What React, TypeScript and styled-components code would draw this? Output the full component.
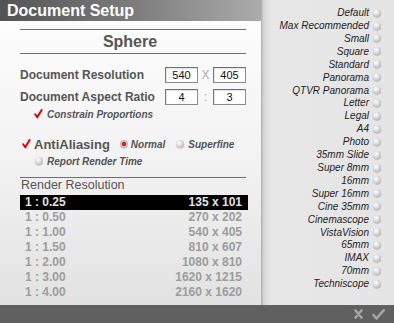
import React from 'react';
import styled, { createGlobalStyle } from 'styled-components';

const Global = createGlobalStyle`
  html, body { margin: 0; padding: 0; }
  body {
    font-family: "Liberation Sans", Arial, Helvetica, sans-serif;
    background: #606060;
  }
  * { box-sizing: border-box; }
`;

const Window = styled.div`
  width: 394px;
  height: 323px;
  display: flex;
  flex-direction: column;
  overflow: hidden;
`;

const Main = styled.div`
  display: flex;
  height: 305px;
`;

const LeftColumn = styled.div`
  width: 261px;
  display: flex;
  flex-direction: column;
`;

const TitleBar = styled.div`
  height: 21px;
  background: linear-gradient(to right, #535353 0%, #7b7b7b 50%, #ababab 100%);
  color: #fff;
  font-weight: bold;
  font-size: 16px;
  line-height: 21px;
  padding-left: 7px;
`;

const Panel = styled.div`
  flex: 1;
  background: linear-gradient(to bottom, #fdfdfd 0%, #f2f2f2 50%, #e2e2e2 100%);
  padding: 8px 15px 0 20px;
  display: flex;
  flex-direction: column;
`;

const Header = styled.div`
  border-top: 1px solid #6e6e6e;
  border-bottom: 1px solid #6e6e6e;
  height: 25px;
  display: flex;
  align-items: center;
  justify-content: center;
  font-size: 16px;
  font-weight: bold;
  color: #555;
  padding-right: 6px;
`;

const FieldRow = styled.div<{ $mt: number }>`
  display: flex;
  align-items: center;
  height: 16px;
  margin-top: ${(p) => p.$mt}px;
`;

const FieldLabel = styled.div`
  flex: 1;
  font-size: 12px;
  font-weight: bold;
  color: #555;
`;

const NumBox = styled.div`
  width: 33px;
  height: 16px;
  border: 1px solid #8a8a8a;
  border-top-color: #707070;
  border-left-color: #7a7a7a;
  background: #fff;
  box-shadow: inset 1px 1px 1px rgba(0, 0, 0, 0.12);
  font-size: 11px;
  line-height: 14px;
  text-align: center;
  color: #111;
`;

const Sep = styled.div`
  width: 15px;
  text-align: center;
  font-size: 12px;
  color: #aaa;
`;

const OptionRow = styled.div<{ $mt: number; $pl: number; $h: number }>`
  display: flex;
  align-items: center;
  height: ${(p) => p.$h}px;
  margin-top: ${(p) => p.$mt}px;
  padding-left: ${(p) => p.$pl}px;
`;

const OptText = styled.span<{ $ml: number }>`
  font-size: 10px;
  font-weight: bold;
  font-style: italic;
  color: #555;
  margin-left: ${(p) => p.$ml}px;
`;

const BigOpt = styled.span`
  font-size: 13px;
  font-weight: bold;
  color: #555;
  margin-left: 3px;
  margin-right: 10px;
`;

const RadioDot = styled.span<{ $on?: boolean; $ml?: number }>`
  display: inline-block;
  flex: none;
  width: 8px;
  height: 8px;
  border-radius: 50%;
  margin-left: ${(p) => p.$ml ?? 0}px;
  background: ${(p) =>
    p.$on
      ? 'radial-gradient(circle at 50% 50%, #e02020 0, #d02020 1.8px, #c8c8c8 2.6px, #a8a8a8 100%)'
      : 'radial-gradient(circle at 38% 35%, #ffffff 0, #e2e2e2 35%, #b8b8b8 78%, #8f8f8f 100%)'};
  box-shadow: 0 0.5px 0.8px rgba(0, 0, 0, 0.3);
`;

const Line = styled.div`
  height: 1px;
  background: #6e6e6e;
  margin-top: 10px;
`;

const SectionLabel = styled.div`
  height: 15px;
  line-height: 15px;
  font-size: 12.5px;
  color: #555;
  padding-left: 1px;
  margin-bottom: 2px;
`;

const ResList = styled.div`
  display: flex;
  flex-direction: column;
  margin-right: -2px;
`;

const ResRow = styled.div<{ $sel?: boolean }>`
  display: flex;
  justify-content: space-between;
  height: 15px;
  line-height: 15px;
  padding: 0 6px 0 5px;
  font-size: 12px;
  font-weight: bold;
  background: ${(p) => (p.$sel ? '#000' : 'transparent')};
  color: ${(p) => (p.$sel ? '#e2e2e2' : '#9c9c9c')};
`;

const RightPanel = styled.div`
  flex: 1;
  background: linear-gradient(to right, #a9a9a9 0px, #cfcfcf 2px, #dcdcdc 4px, #e7e7e7 10px, #e5e5e5 100%);
  padding: 6.2px 13px 0 0;
  display: flex;
  flex-direction: column;
  align-items: flex-end;
`;

const PresetRow = styled.div`
  height: 12.92px;
  display: flex;
  align-items: center;
  gap: 4px;
  font-size: 10px;
  font-style: italic;
  color: #222;
`;

const BottomBar = styled.div`
  height: 18px;
  background: #606060;
  display: flex;
  justify-content: flex-end;
  align-items: center;
  gap: 9px;
  padding-right: 9px;
`;

const RedCheck = () => (
  <svg width="9" height="10" viewBox="0 0 9 10" style={{ flex: 'none' }}>
    <path d="M1.6 6.2 L3.6 9 L8 1.8" fill="none" stroke="#9a9a9a" strokeWidth="2" strokeLinecap="round" strokeLinejoin="round" opacity="0.7" />
    <path d="M1.2 5.2 L3.2 8 L7.6 0.9" fill="none" stroke="#d40000" strokeWidth="1.8" strokeLinecap="round" strokeLinejoin="round" />
  </svg>
);

const CancelIcon = () => (
  <svg width="9" height="10" viewBox="0 0 9 10">
    <path d="M1.5 1.5 L7.5 8.5 M7.5 1.5 L1.5 8.5" stroke="#a6a6a6" strokeWidth="2.6" strokeLinecap="round" />
  </svg>
);

const OkIcon = () => (
  <svg width="13" height="11" viewBox="0 0 13 11">
    <path d="M1.5 6 L4.5 9.5 L11.8 1.2" fill="none" stroke="#a6a6a6" strokeWidth="2.6" strokeLinecap="round" strokeLinejoin="round" />
  </svg>
);

const resolutions: [string, string][] = [
  ['1 : 0.25', '135 x 101'],
  ['1 : 0.50', '270 x 202'],
  ['1 : 1.00', '540 x 405'],
  ['1 : 1.50', '810 x 607'],
  ['1 : 2.00', '1080 x 810'],
  ['1 : 3.00', '1620 x 1215'],
  ['1 : 4.00', '2160 x 1620'],
];

const presets = [
  'Default',
  'Max Recommended',
  'Small',
  'Square',
  'Standard',
  'Panorama',
  'QTVR Panorama',
  'Letter',
  'Legal',
  'A4',
  'Photo',
  '35mm Slide',
  'Super 8mm',
  '16mm',
  'Super 16mm',
  'Cine 35mm',
  'Cinemascope',
  'VistaVision',
  '65mm',
  'IMAX',
  '70mm',
  'Techniscope',
];

export default function App() {
  return (
    <>
      <Global />
      <Window>
        <Main>
          <LeftColumn>
            <TitleBar>Document Setup</TitleBar>
            <Panel>
              <Header>Sphere</Header>
              <FieldRow $mt={13}>
                <FieldLabel>Document Resolution</FieldLabel>
                <NumBox>540</NumBox>
                <Sep>X</Sep>
                <NumBox>405</NumBox>
              </FieldRow>
              <FieldRow $mt={6}>
                <FieldLabel>Document Aspect Ratio</FieldLabel>
                <NumBox>4</NumBox>
                <Sep>:</Sep>
                <NumBox>3</NumBox>
              </FieldRow>
              <OptionRow $mt={3} $pl={14} $h={12}>
                <RedCheck />
                <OptText $ml={4}>Constrain Proportions</OptText>
              </OptionRow>
              <OptionRow $mt={16} $pl={2} $h={16}>
                <RedCheck />
                <BigOpt>AntiAliasing</BigOpt>
                <RadioDot $on />
                <OptText $ml={3}>Normal</OptText>
                <RadioDot $ml={11} />
                <OptText $ml={4}>Superfine</OptText>
              </OptionRow>
              <OptionRow $mt={3} $pl={15} $h={12}>
                <RadioDot />
                <OptText $ml={4}>Report Render Time</OptText>
              </OptionRow>
              <Line />
              <SectionLabel>Render Resolution</SectionLabel>
              <ResList>
                {resolutions.map(([r, s], i) => (
                  <ResRow key={r} $sel={i === 0}>
                    <span>{r}</span>
                    <span>{s}</span>
                  </ResRow>
                ))}
              </ResList>
            </Panel>
          </LeftColumn>
          <RightPanel>
            {presets.map((p) => (
              <PresetRow key={p}>
                <span>{p}</span>
                <RadioDot />
              </PresetRow>
            ))}
          </RightPanel>
        </Main>
        <BottomBar>
          <CancelIcon />
          <OkIcon />
        </BottomBar>
      </Window>
    </>
  );
}
